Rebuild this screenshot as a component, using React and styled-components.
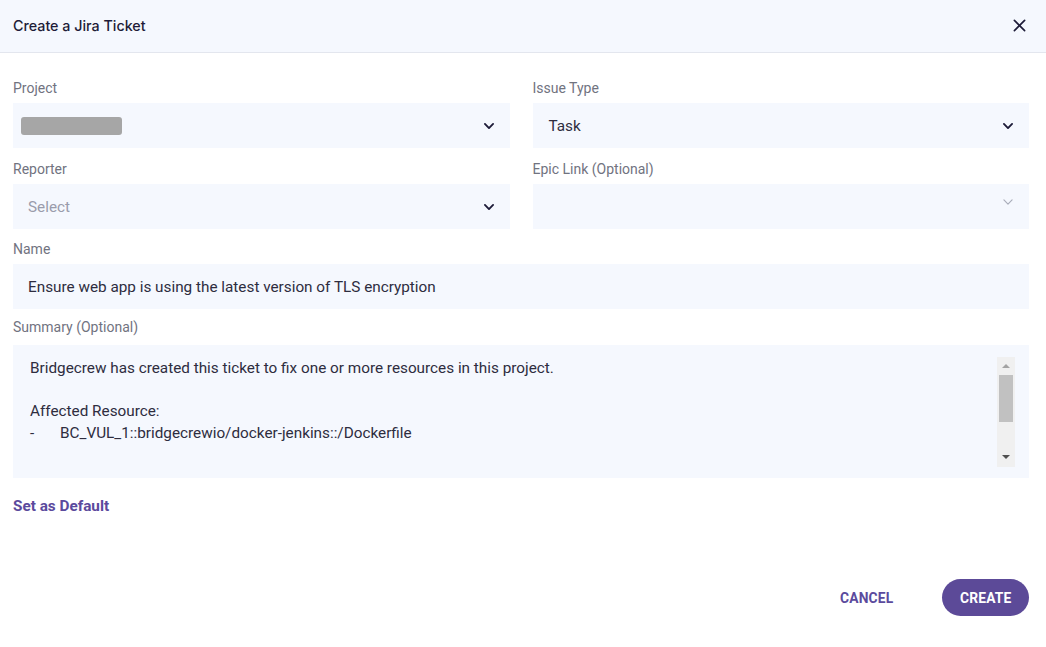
import React from "react";
import styled, { createGlobalStyle } from "styled-components";

const GlobalStyle = createGlobalStyle`
  html, body {
    margin: 0;
    padding: 0;
    background: #ffffff;
    font-family: Roboto, "Liberation Sans", sans-serif;
  }
  * { box-sizing: border-box; }
`;

const Modal = styled.div`
  width: 1046px;
  height: 647px;
  background: #ffffff;
  display: flex;
  flex-direction: column;
`;

const Header = styled.div`
  height: 53px;
  display: flex;
  align-items: center;
  justify-content: space-between;
  padding: 0 20px 1px 13px;
  background: #f5f8fe;
  border-bottom: 1px solid #e3e6ee;
`;

const Title = styled.h1`
  margin: 0;
  font-family: Inter, Roboto, sans-serif;
  font-size: 14.3px;
  font-weight: 500;
  color: #1e1c38;
`;

const CloseButton = styled.button`
  border: none;
  background: none;
  padding: 0;
  width: 14px;
  height: 14px;
  display: flex;
  align-items: center;
  justify-content: center;
  cursor: pointer;
`;

const Body = styled.div`
  padding: 27px 17px 0 13px;
  display: flex;
  flex-direction: column;
`;

const Grid = styled.div`
  display: grid;
  grid-template-columns: 1fr 1fr;
  column-gap: 23px;
  row-gap: 13px;
  margin-bottom: 12px;
`;

const Group = styled.div`
  display: flex;
  flex-direction: column;
  margin-bottom: ${(p) => p.$mb || 0}px;
`;

const Label = styled.label`
  font-size: 14px;
  line-height: 16px;
  color: #71737f;
  margin-bottom: ${(p) => p.$gap || 7}px;
`;

const Field = styled.div`
  height: 45px;
  background: #f5f8fe;
  display: flex;
  align-items: ${(p) => (p.$top ? "flex-start" : "center")};
  justify-content: space-between;
  padding: ${(p) => (p.$top ? 11 : 0)}px 14px 0 ${(p) => p.$pl || 15}px;
  font-size: 15.3px;
  color: ${(p) => (p.$placeholder ? "#9a9cab" : "#2e2d3f")};
`;

const Redacted = styled.span`
  width: 101px;
  height: 18px;
  border-radius: 3px;
  background: #a6a6a6;
  margin-top: 1px;
`;

const TextArea = styled.div`
  height: 133px;
  background: #f5f8fe;
  display: flex;
  justify-content: space-between;
  padding: 12px 14px 11px 17px;
`;

const TextLines = styled.div`
  padding-top: 1px;
  font-size: 15.3px;
  line-height: 21.5px;
  color: #2e2d3f;
  white-space: pre;
`;

const ResourceLine = styled.div`
  display: flex;
`;

const Dash = styled.span`
  width: 30px;
`;

const Scrollbar = styled.div`
  width: 18px;
  background: #f0f0f0;
  display: flex;
  flex-direction: column;
  align-items: center;
  padding: 7px 0 8px;
`;

const Arrow = styled.span`
  width: 0;
  height: 0;
  border-left: 4px solid transparent;
  border-right: 4px solid transparent;
  ${(p) =>
    p.$up
      ? "border-bottom: 4px solid #a3a3a3;"
      : "border-top: 4px solid #505050;"}
`;

const Thumb = styled.div`
  width: 14px;
  height: 47px;
  margin-top: 7px;
  background: #c1c1c1;
  flex: none;
`;

const Spacer = styled.div`
  flex: 1;
`;

const LinkButton = styled.button`
  align-self: flex-start;
  margin-top: 20px;
  border: none;
  background: none;
  padding: 0;
  font-family: Roboto, sans-serif;
  font-size: 15.3px;
  line-height: 16px;
  font-weight: 700;
  color: #5b4a9d;
  cursor: pointer;
`;

const Footer = styled.div`
  display: flex;
  justify-content: flex-end;
  align-items: center;
  gap: 30px;
  padding: 65px 17px 0 0;
`;

const Button = styled.button`
  height: 37px;
  border: none;
  border-radius: 19px;
  padding: 0 ${(p) => (p.$primary ? 17.5 : 19)}px;
  font-family: Roboto, sans-serif;
  font-size: 13.8px;
  font-weight: 700;
  letter-spacing: 0.2px;
  text-transform: uppercase;
  background: ${(p) => (p.$primary ? "#5c4a98" : "transparent")};
  color: ${(p) => (p.$primary ? "#ffffff" : "#5b4a9d")};
  cursor: pointer;
`;

const Chevron = ({ light }) => (
  <svg width="14" height="14" viewBox="0 0 24 24" fill="none"
    stroke={light ? "#a9adba" : "#1d1b38"}
    strokeWidth={light ? 2 : 3.2}
    strokeLinecap="round" strokeLinejoin="round">
    <polyline points="5 8.5 12 15.5 19 8.5" />
  </svg>
);

const CloseIcon = () => (
  <svg width="13" height="13" viewBox="0 0 14 14" stroke="#1d1b38" strokeWidth="1.8" strokeLinecap="round">
    <line x1="1.5" y1="1.5" x2="12.5" y2="12.5" />
    <line x1="12.5" y1="1.5" x2="1.5" y2="12.5" />
  </svg>
);

const App = () => {
  return (
    <Modal>
      <GlobalStyle />
      <Header>
        <Title>Create a Jira Ticket</Title>
        <CloseButton aria-label="close">
          <CloseIcon />
        </CloseButton>
      </Header>
      <Body>
        <Grid>
          <Group>
            <Label>Project</Label>
            <Field $pl={8}>
              <Redacted />
              <Chevron />
            </Field>
          </Group>
          <Group>
            <Label>Issue Type</Label>
            <Field $pl={16}>
              <span>Task</span>
              <Chevron />
            </Field>
          </Group>
          <Group>
            <Label>Reporter</Label>
            <Field $placeholder>
              <span>Select</span>
              <Chevron />
            </Field>
          </Group>
          <Group>
            <Label>Epic Link (Optional)</Label>
            <Field $top>
              <span />
              <Chevron light />
            </Field>
          </Group>
        </Grid>
        <Group $mb={10}>
          <Label>Name</Label>
          <Field>
            <span>Ensure web app is using the latest version of TLS encryption</span>
          </Field>
        </Group>
        <Group>
          <Label $gap={10}>Summary (Optional)</Label>
          <TextArea>
            <TextLines>
              <div>Bridgecrew has created this ticket to fix one or more resources in this project.</div>
              <div>&nbsp;</div>
              <div>Affected Resource:</div>
              <ResourceLine>
                <Dash>-</Dash>
                <span>BC_VUL_1::bridgecrewio/docker-jenkins::/Dockerfile</span>
              </ResourceLine>
            </TextLines>
            <Scrollbar>
              <Arrow $up />
              <Thumb />
              <Spacer />
              <Arrow />
            </Scrollbar>
          </TextArea>
        </Group>
        <LinkButton>Set as Default</LinkButton>
      </Body>
      <Footer>
        <Button>Cancel</Button>
        <Button $primary>Create</Button>
      </Footer>
    </Modal>
  );
};

export default App;
